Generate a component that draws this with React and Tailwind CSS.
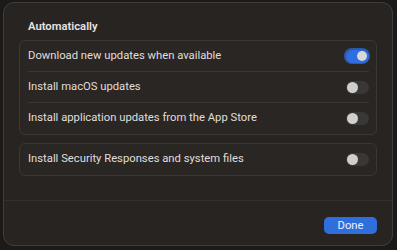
import React from "react";

function Toggle({ on }) {
  if (on) {
    return (
      <div className="w-[26px] h-[16px] rounded-full bg-[#2c5aa8] p-[1.5px] flex -mr-[1px]">
        <div className="flex-1 rounded-full bg-[#2f6ee0] flex items-center justify-end pr-[1.5px]">
          <div className="w-[10px] h-[10px] rounded-full bg-[#d8d8d8]" />
        </div>
      </div>
    );
  }
  return (
    <div className="w-[23px] h-[13px] rounded-full bg-[#3a3735] flex items-center pl-[1px]">
      <div className="w-[11px] h-[11px] rounded-full bg-[#cfcfcf]" />
    </div>
  );
}

function Row({ label, on, last }) {
  return (
    <div className="pl-[8px] pr-[7px]">
      <div
        className={
          "h-[31px] flex items-center justify-between " +
          (last ? "" : "border-b border-[#393634]")
        }
      >
        <span className="text-[11.25px] text-[#e0dedc]">{label}</span>
        <Toggle on={on} />
      </div>
    </div>
  );
}

export default function App() {
  return (
    <div
      className="w-[397px] h-[250px] bg-[#1c1a19] pl-[3px] pt-[2px] overflow-hidden"
      style={{ fontFamily: "Roboto, 'Noto Sans', sans-serif" }}
    >
      <div className="w-[390px] h-[244px] rounded-[11px] border border-[#403d3b] bg-[#282422] flex flex-col">
        <div className="px-[15px] pt-[16px] pb-[24px] flex flex-col border-b border-[#33302e]">
          <div className="text-[11.25px] font-semibold text-[#e6e4e2] pl-[9px] h-[16px] leading-[16px] mb-[5px]">
            Automatically
          </div>
          <div className="rounded-[6px] border border-[#3a3735] bg-[#2a2624]">
            <Row label="Download new updates when available" on />
            <Row label="Install macOS updates" />
            <Row label="Install application updates from the App Store" last />
          </div>
          <div className="mt-[8px] rounded-[6px] border border-[#3a3735] bg-[#2a2624]">
            <Row label="Install Security Responses and system files" last />
          </div>
        </div>
        <div className="flex justify-end pr-[15px] pt-[16px]">
          <button className="w-[53px] h-[17px] rounded-[5px] bg-[#2f6fdb] text-[11.25px] text-[#eef2fa] leading-[17px]">
            Done
          </button>
        </div>
      </div>
    </div>
  );
}
